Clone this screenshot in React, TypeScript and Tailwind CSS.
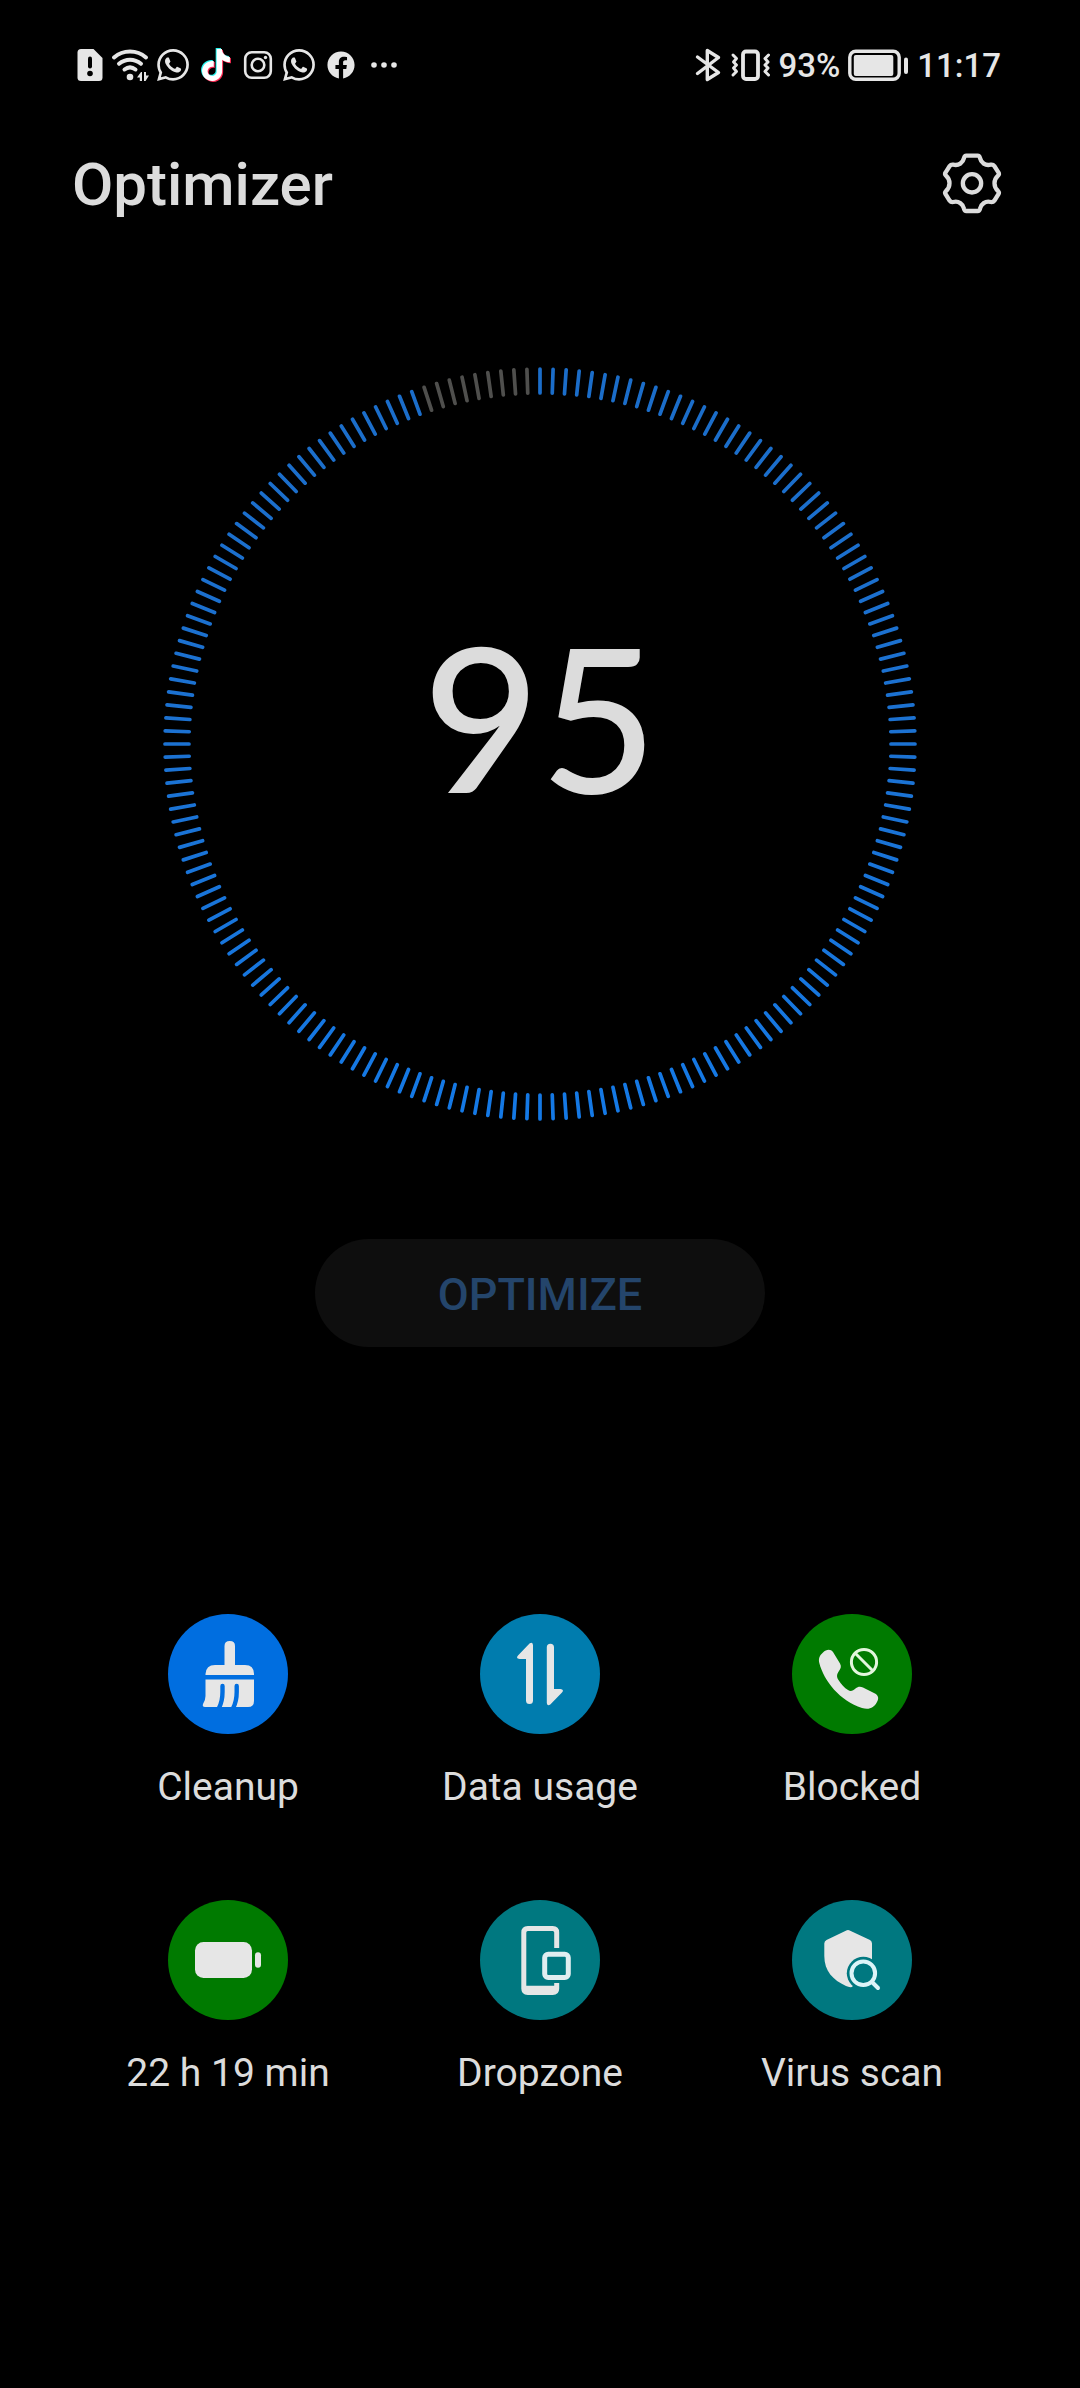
import type { ReactNode } from "react";
import { SiTiktok, SiWhatsapp } from "react-icons/si";
import { FaFacebook } from "react-icons/fa";

const TICK_COUNT = 180;

function SimAlertIcon() {
  return (
    <svg viewBox="0 0 26 34" className="w-[26px] h-[34px]">
      <path
        d="M4 1H16.5L25.5 10V29.5Q25.5 33 22 33H4Q.5 33 .5 29.5V4.5Q.5 1 4 1Z"
        fill="#e6e6e6"
      />
      <path d="M13 10.5V18.5" stroke="#000" strokeWidth="4" strokeLinecap="round" />
      <circle cx="13" cy="25.5" r="2.8" fill="#000" />
    </svg>
  );
}

function WifiIcon() {
  return (
    <svg viewBox="0 0 38 34" className="w-[38px] h-[34px]" fill="none">
      <g stroke="#e6e6e6" strokeWidth="4" strokeLinecap="round">
        <path d="M3 9.5C12 1.5 26 1.5 35 9.5" />
        <path d="M8 15.8C14.5 10.3 23.5 10.3 30 15.8" />
        <path d="M13.5 21.5C17 18.8 21 18.8 24.5 21.5" />
      </g>
      <circle cx="19" cy="29" r="3.3" fill="#e6e6e6" />
      <path d="M31 24V33H28.8V29.5H26L30 24ZM33 33V24H35V27.5H38L34.5 33Z" fill="#e6e6e6" />
    </svg>
  );
}

function TiktokIcon() {
  return (
    <span className="relative w-9 h-[34px]">
      <SiTiktok className="absolute left-[2px] top-0 size-8 text-[#25f4ee]" />
      <SiTiktok className="absolute left-[4px] top-[2px] size-8 text-[#fe2c55]" />
      <SiTiktok className="absolute left-[3px] top-px size-8 text-white" />
    </span>
  );
}

function InstagramIcon() {
  return (
    <svg viewBox="0 0 34 34" className="w-[34px] h-[34px]" fill="none">
      <rect x="4.2" y="4.2" width="25.6" height="25.6" rx="6.5" stroke="#e6e6e6" strokeWidth="2.6" />
      <circle cx="17" cy="17" r="6.3" stroke="#e6e6e6" strokeWidth="2.6" />
      <circle cx="24.5" cy="9.5" r="1.7" fill="#e6e6e6" />
    </svg>
  );
}

function BluetoothIcon() {
  return (
    <svg viewBox="0 0 28 34" className="w-7 h-[34px]" fill="none">
      <path
        d="M3.5 9L24.5 24.5L13.3 31.5V2.5L24.5 9.5L3.5 25.5"
        stroke="#e6e6e6"
        strokeWidth="3.4"
        strokeLinecap="round"
        strokeLinejoin="round"
      />
    </svg>
  );
}

function VibrateIcon() {
  return (
    <svg viewBox="0 0 40 34" className="w-10 h-[34px]" fill="none" stroke="#e6e6e6" strokeLinecap="round" strokeLinejoin="round">
      <rect x="13" y="3.5" width="15" height="27.5" rx="3" strokeWidth="3.8" />
      <path d="M3 7L6.5 10.5L3.5 14L6.5 17L3.5 20L6.5 23.5L3 27" strokeWidth="3" />
      <path d="M38.5 7L35 10.5L38 14L35 17L38 20L35 23.5L38.5 27" strokeWidth="3" />
    </svg>
  );
}

function StatusBatteryIcon() {
  return (
    <svg viewBox="0 0 61 34" className="w-[61px] h-[34px]">
      <rect x="1.8" y="3.3" width="49.4" height="28" rx="6" fill="none" stroke="#e6e6e6" strokeWidth="3.4" />
      <rect x="5.8" y="7" width="39.5" height="21" rx="2" fill="#e6e6e6" />
      <rect x="56" y="9.5" width="4" height="16.5" rx="2" fill="#e6e6e6" />
    </svg>
  );
}

function StatusBar() {
  return (
    <div className="h-[130px] pl-[77px] pr-[79px] flex items-center justify-between text-[#e6e6e6] text-[33px] leading-none font-medium">
      <div className="flex items-center gap-2">
        <SimAlertIcon />
        <WifiIcon />
        <SiWhatsapp className="size-8" />
        <TiktokIcon />
        <InstagramIcon />
        <SiWhatsapp className="size-8" />
        <span className="w-9 flex justify-center">
          <FaFacebook className="size-7" />
        </span>
        <svg viewBox="0 0 34 34" className="w-[34px] h-[34px]" fill="#e6e6e6">
          <circle cx="7" cy="17" r="2.8" />
          <circle cx="17" cy="17" r="2.8" />
          <circle cx="27" cy="17" r="2.8" />
        </svg>
      </div>
      <div className="flex items-center gap-2">
        <BluetoothIcon />
        <VibrateIcon />
        <span>93%</span>
        <StatusBatteryIcon />
        <span>11:17</span>
      </div>
    </div>
  );
}

function GearIcon() {
  return (
    <svg viewBox="-108 -106 216 216" className="size-[72px]" fill="none" stroke="#dcdcdc">
      <path
        d="M-17 -83H17C22 -83 23 -80 24 -76C27 -62 40 -52 56 -56C61 -57 64 -56 67 -52L79 -33C82 -29 81 -26 78 -23C64 -11 64 11 78 23C81 26 82 29 79 33L67 52C64 56 61 57 56 56C40 52 27 62 24 76C23 80 22 83 17 83H-17C-22 83 -23 80 -24 76C-27 62 -40 52 -56 56C-61 57 -64 56 -67 52L-79 33C-82 29 -81 26 -78 23C-64 11 -64 -11 -78 -23C-81 -26 -82 -29 -79 -33L-67 -52C-64 -56 -61 -57 -56 -56C-40 -52 -27 -62 -24 -76C-23 -80 -22 -83 -17 -83Z"
        strokeWidth="13"
      />
      <circle r="27.5" strokeWidth="13" />
    </svg>
  );
}

// one "M..L.." segment per tick, clockwise from 12 o'clock
function ticks(from: number, to: number) {
  let d = "";
  for (let i = from; i < to; i++) {
    const a = (i / TICK_COUNT) * Math.PI * 2;
    const x = Math.sin(a);
    const y = -Math.cos(a);
    d += `M${x * 351} ${y * 351}L${x * 375} ${y * 375}`;
  }
  return d;
}

function ScoreRing({ score }: { score: number }) {
  const filled = Math.round((score / 100) * TICK_COUNT);

  return (
    <div className="relative w-[754px] max-w-full">
      <svg viewBox="-377 -377 754 754" className="w-full" strokeWidth="3.7" strokeLinecap="round">
        <defs>
          <linearGradient id="ring" gradientUnits="userSpaceOnUse" x1="0" y1="-377" x2="0" y2="377">
            <stop offset="0" stopColor="#1b6dc9" />
            <stop offset="0.5" stopColor="#1c72d2" />
            <stop offset="1" stopColor="#1479e6" />
          </linearGradient>
        </defs>
        <path d={ticks(0, filled)} stroke="url(#ring)" />
        <path d={ticks(filled, TICK_COUNT)} stroke="#4f4f4d" />
      </svg>
      <p className="absolute inset-0 pb-[58px] flex items-center justify-center font-['Lato',sans-serif] font-medium text-[202px] leading-none text-[#dcdcdc]">
        {score}
      </p>
    </div>
  );
}

function Tile({ label, color, children }: { label: string; color: string; children: ReactNode }) {
  return (
    <button type="button" className="flex flex-col items-center gap-[29px]">
      <svg viewBox="0 0 120 120" className={`size-[120px] rounded-full ${color}`} fill="#e6e6e6">
        {children}
      </svg>
      <span className="text-[39px] leading-[48px] text-[#dcdcdc]">{label}</span>
    </button>
  );
}

export default function App() {
  return (
    <div className="min-h-screen bg-black font-['Roboto',sans-serif] flex flex-col">
      <StatusBar />
      <header className="h-[108px] px-[72px] flex items-center justify-between">
        <h1 className="text-[60px] leading-none font-medium text-[#dcdcdc] pt-[2px]">Optimizer</h1>
        <button type="button" aria-label="Settings">
          <GearIcon />
        </button>
      </header>
      <main className="flex flex-col items-center pt-[129px]">
        <ScoreRing score={95} />
        <button
          type="button"
          disabled
          className="mt-[118px] w-[450px] h-[108px] pt-[2px] rounded-full bg-[#0e0e0e] text-[#24456b] text-[45px] leading-none font-medium"
        >
          OPTIMIZE
        </button>
        <div className="mt-[267px] w-full px-[72px] grid grid-cols-3 gap-y-[89px]">
          <Tile label="Cleanup" color="bg-[#006ee0]">
            <path d="M56.5 53V32Q56.5 27 61.8 27T67 32V53Z" />
            <path d="M37.5 61V60Q38 51 47 51H77Q86 51 86 60V61Z" />
            <path d="M37.5 65.5H86V87Q86 93 80 93H37Q34 93 35 90Q37.5 86 37.5 82Z" />
            <path
              d="M54.5 72V78Q54.5 87 51 94M68.7 72V78Q68.7 87 65.2 94"
              fill="none"
              stroke="#006ee0"
              strokeWidth="4.4"
              strokeLinecap="round"
            />
          </Tile>
          <Tile label="Data usage" color="bg-[#007cae]">
            <path d="M53 31V86.5Q53 90 49.5 90T46 86.5V45H39.5Q35.5 44.5 38 41.5L49.5 29.5Q52.5 27.5 53 31Z" />
            <path d="M66.8 89V33.2Q66.8 29.7 70.4 29.7T74 33.2V75H80.5Q84.5 75.5 82 78.5L70.3 90.5Q67.3 92.5 66.8 89Z" />
          </Tile>
          <Tile label="Blocked" color="bg-[#007a00]">
            <path d="M31 38.5C34 35.5 38.5 34.5 41 38L48 49.5C49.5 52.5 49 54 47 57C44.5 60.5 44.5 63 46.5 66C49 70 52.5 74 56 76C59 78 61 76.5 63.5 74.5C66 72.5 68 72 71 73.5L83 79.5C86.5 81.5 87 84.5 85 88C82 94 77 96 70 94C48 87 32 67 27.3 49C26.3 44.5 27.5 41.5 31 38.5Z" />
            <g fill="none" stroke="#e2f6dc" strokeWidth="3">
              <circle cx="72" cy="48" r="12.6" />
              <path d="M63 39L81 57" />
            </g>
          </Tile>
          <Tile label="22 h 19 min" color="bg-[#007a00]">
            <rect x="27" y="42" width="57" height="36" rx="8.5" />
            <rect x="87" y="52.3" width="6" height="15.5" rx="3" />
          </Tile>
          <Tile label="Dropzone" color="bg-[#007880]">
            <path
              d="M76.7 48V32.5Q76.7 28.5 72.7 28.5H47.8Q43.8 28.5 43.8 32.5V88.5Q43.8 92.5 47.8 92.5H72.7Q76.7 92.5 76.7 88.5V83"
              fill="none"
              stroke="#e6e6e6"
              strokeWidth="5"
            />
            <path d="M43 85.8H77V90Q77 94 73 94H47Q43 94 43 90Z" />
            <rect x="64.7" y="54.2" width="23.6" height="23.2" rx="3.5" fill="none" stroke="#e0eef0" strokeWidth="5" />
          </Tile>
          <Tile label="Virus scan" color="bg-[#007880]">
            <path d="M53.8 30.7Q56 29.5 58.2 30.7L78 40Q80 41 80 43.5V62L60 87Q57 87.5 54 86C41 80 32.3 71 32.3 56V43.5Q32.3 41 34.5 40Z" />
            <circle cx="71.3" cy="73.3" r="16.5" fill="#007880" />
            <g fill="none" stroke="#dcf4f8" strokeWidth="4" strokeLinecap="round">
              <circle cx="71.3" cy="73.3" r="11.8" />
              <path d="M80 82L86 88" />
            </g>
          </Tile>
        </div>
      </main>
    </div>
  );
}
